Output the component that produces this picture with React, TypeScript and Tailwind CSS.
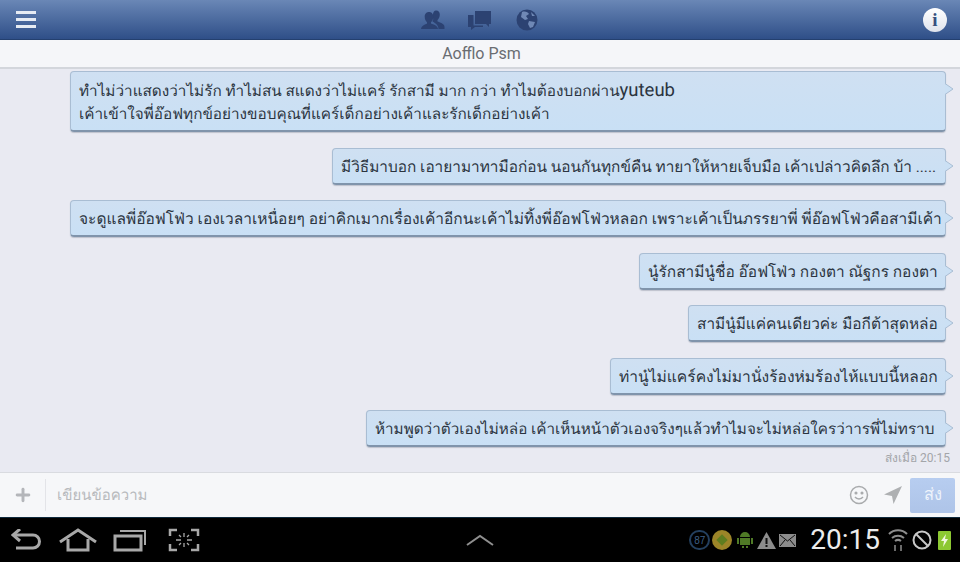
import type { ReactNode } from "react";
import { Plus } from "lucide-react";

const thai = "font-['Roboto','Noto_Sans','Liberation_Sans','DejaVu_Sans',sans-serif]";

function Bubble({ width, mt, size, children }: { width: string; mt: string; size: string; children: ReactNode }) {
  return (
    <div className={`relative ${width} ${mt} ${size} self-end whitespace-nowrap rounded-[4px] border border-[#a9bdd3] border-b-2 border-b-[#8094ab] bg-gradient-to-b from-[#cfe0f2] to-[#c9e0f5] pb-[4px] pl-[8px] pr-[9px] pt-[7px] leading-[23px] text-[#2b3440] shadow-[0_1px_1px_rgba(90,100,120,0.3)] [text-rendering:geometricPrecision]`}>
      {children}
      <svg className="absolute right-[-9px] top-[11px]" width="9" height="12" viewBox="0 0 9 12" fill="#cbe0f4" stroke="#a9bdd3">
        <path d="M0 0.500 8 6 0 11.500" />
      </svg>
    </div>
  );
}

function Friends() {
  return (
    <svg width="24" height="20" viewBox="0 0 24 20" fill="#2c4272">
      <path d="M15 0.500c2.700 0 3.800 2 3.800 4.200 0 2-1 4.300-2.300 5.300v1.500c2 .8 7 2 7 5.500V19h-6c0-4-3.500-6-6-7.500 0-1 .3-1.500.8-2.300C11.600 6 11.500 0.500 15 .5z" />
      <path d="M8 2c3 0 4.300 2.300 4.300 4.800 0 2.200-1 4.400-2.300 5.400v1.300c2.500 1 6.500 2 7 5.500H0c.5-3.500 4.500-4.500 6-5.500v-1.300c-1.300-1-2.300-3.200-2.300-5.400C3.700 4.300 5 2 8 2z" />
    </svg>
  );
}

function Chat() {
  return (
    <svg width="23" height="20" viewBox="0 0 23 20" fill="#2c4272">
      <path d="M7 1h16v13h-2v3l-3-3H7z" />
      <path d="M0 5h5.500v10.500H15V17H7l-4 3v-3H0z" />
    </svg>
  );
}

function Globe() {
  return (
    <svg width="22" height="22" viewBox="0 0 22 22">
      <circle cx="11" cy="11" r="10.500" fill="#2c4272" />
      <path d="M6 3c3-1 6 0 7 2l-3 2 2 3-3 1-4-3zM13 12l6 1-2 5-3 1-2-4zM15 3l4 4-3 0z" fill="#6f88b5" />
    </svg>
  );
}

function Smiley() {
  return (
    <svg width="20" height="20" viewBox="0 0 20 20" fill="none" stroke="#a9abad" strokeWidth="1.500">
      <circle cx="10" cy="10" r="8.500" />
      <circle cx="7" cy="8" r="0.800" fill="#a9abad" />
      <circle cx="13" cy="8" r="0.800" fill="#a9abad" />
      <path d="M6 12c2 2.500 6 2.500 8 0" />
    </svg>
  );
}

function Locate() {
  return (
    <svg width="18" height="18" viewBox="0 0 18 18" fill="#aeb0b2">
      <path d="M18 0 0 8.500l8 1.500 1.500 8z" />
    </svg>
  );
}

function NavIcons() {
  return (
    <div className="flex flex-1 basis-0 items-center">
      <svg className="ml-[2px]" width="31" height="22" viewBox="0 0 31 22" fill="none" stroke="#a8a8a8" strokeWidth="3">
        <path d="M3 6h19a6.500 6.500 0 0 1 0 13H5" />
        <path d="M9 0 2 6l7 6" />
      </svg>
      <svg className="ml-[17px]" width="38" height="24" viewBox="0 0 38 24" fill="none" stroke="#a8a8a8" strokeWidth="3">
        <path d="M1 14 19 2l18 12" />
        <path d="M9 11v11h20V11" />
      </svg>
      <svg className="ml-[16px]" width="34" height="24" viewBox="0 0 34 24" fill="none" stroke="#a8a8a8" strokeWidth="3">
        <rect x="2" y="8" width="26" height="14" />
        <path d="M7 3h25v14" strokeWidth="2" />
      </svg>
      <svg className="ml-[21px]" width="32" height="24" viewBox="0 0 32 24" fill="none" stroke="#a8a8a8">
        <path d="M2 8V2h7M2 16v6h7M30 8V2h-7M30 16v6h-7" strokeWidth="2.500" />
        <path d="M16 5v4M16 15v4M8 12h5M19 12h5M11 7l2 2M21 7l-2 2M11 17l2-2M21 17l-2-2" strokeWidth="1.300" />
      </svg>
    </div>
  );
}

function StatusIcons() {
  return (
    <div className="flex items-center">
      <span className="flex h-[20px] w-[21px] items-center justify-center rounded-full border-2 border-[#24405f] font-['Liberation_Sans',sans-serif] text-[10px] text-[#3d5f85]">87</span>
      <span className="ml-[2px] flex h-[20px] w-[20px] items-center justify-center rounded-full bg-[#9c8528]">
        <span className="h-[8px] w-[8px] rotate-45 bg-[#5f7d1f]" />
      </span>
      <svg className="ml-[4px]" width="18" height="16" viewBox="0 0 18 16" fill="#4f7a26">
        <path d="M4 5a5 5 0 0 1 10 0zM4 6h10v7H4zM1 6h2v6H1zM15 6h2v6h-2zM6 14h2v2H6zM10 14h2v2h-2z" />
      </svg>
      <svg className="ml-[3px]" width="19" height="17" viewBox="0 0 19 17">
        <path d="M9.500 0 19 17H0z" fill="#8c8c8c" />
        <path d="M8.500 6h2v6h-2zM8.500 13h2v2h-2z" fill="#111" />
      </svg>
      <svg className="ml-[3px]" width="17" height="13" viewBox="0 0 17 13" fill="#8c8c8c">
        <path d="M0 0h17v13H0z" />
        <path d="M1 1l7.500 6L16 1M1 12l5-6M16 12l-5-6" fill="none" stroke="#111" />
      </svg>
    </div>
  );
}

export default function App() {
  return (
    <div className={`flex h-[562px] w-[960px] flex-col overflow-hidden bg-black ${thai}`}>
      {/* top bar */}
      <div className="flex h-[40px] shrink-0 items-center justify-between border-b border-[#24406f] bg-gradient-to-b from-[#6a87b6] to-[#2f4f88] pl-[16px] pr-[13px]">
        <div className="flex w-[20px] flex-col gap-[4px]">
          <span className="h-[3px] bg-[#e6ebf3]" />
          <span className="h-[3px] bg-[#e6ebf3]" />
          <span className="h-[3px] bg-[#e6ebf3]" />
        </div>
        <div className="flex items-center">
          <Friends />
          <span className="ml-[23px]"><Chat /></span>
          <span className="ml-[25px]"><Globe /></span>
        </div>
        <div className="flex h-[24px] w-[24px] items-center justify-center rounded-full bg-gradient-to-b from-white to-[#dfe3ec] font-['Liberation_Serif',serif] text-[19px] font-bold leading-none text-[#36507f]">
          i
        </div>
      </div>

      {/* name */}
      <div className="flex h-[29px] shrink-0 items-center justify-center border-b-2 border-[#d3d6dc] bg-[#f5f6f9] pl-[3px] font-['Roboto',sans-serif] text-[16px] text-[#6a6d72]">
        Aofflo Psm
      </div>

      {/* messages */}
      <div className="flex min-h-0 flex-1 flex-col bg-[#e9eaf2] pl-[70px] pr-[14px] pt-[2px]">
        <Bubble width="w-[876px]" mt="mt-0" size="text-[15.3px]">
          <div>
            ทำไม่ว่าแสดงว่าไม่รัก ทำไม่สน สแดงว่าไม่แคร์ รักสามี มาก กว่า ทำไมต้องบอกผ่าน<span className="text-[18.5px]">yuteub</span>
          </div>
          <div>เค้าเข้าใจพี่อ๊อฟทุกข์อย่างขอบคุณที่แคร์เด็กอย่างเค้าและรักเด็กอย่างเค้า</div>
        </Bubble>
        <Bubble width="w-[614px]" mt="mt-[16px]" size="text-[15.4px]">
          มีวิธีมาบอก เอายามาทามือก่อน นอนกันทุกข์คืน ทายาให้หายเจ็บมือ เค้าเปล่าวคิดลึก บ้า .....
        </Bubble>
        <Bubble width="w-[876px]" mt="mt-[15px]" size="text-[15.5px]">
          จะดูแลพี่อ๊อฟโฟ่ว เองเวลาเหนื่อยๆ อย่าคิกเมากเรื่องเค้าอีกนะเค้าไม่ทิ้งพี่อ๊อฟโฟ่วหลอก เพราะเค้าเป็นภรรยาพี่ พี่อ๊อฟโฟ่วคือสามีเค้า
        </Bubble>
        <Bubble width="w-[307px]" mt="mt-[16px]" size="text-[15.45px]">
          นู๋รักสามีนู๋ชื่อ อ๊อฟโฟ่ว กองตา ณัฐกร กองตา
        </Bubble>
        <Bubble width="w-[258px]" mt="mt-[15px]" size="text-[15.4px]">
          สามีนู๋มีแค่คนเดียวค่ะ มือกีต้าสุดหล่อ
        </Bubble>
        <Bubble width="w-[336px]" mt="mt-[16px]" size="text-[15.6px]">
          ท่านู๋ไม่แคร์คงไม่มานั่งร้องห่มร้องไห้แบบนี้หลอก
        </Bubble>
        <Bubble width="w-[580px]" mt="mt-[15px]" size="text-[15.25px]">
          ห้ามพูดว่าตัวเองไม่หล่อ เค้าเห็นหน้าตัวเองจริงๆแล้วทำไมจะไม่หล่อใครว่าารพี่ไม่ทราบ
        </Bubble>
        <div className="mr-[-4px] mt-[4px] text-right text-[12px] leading-[14px] text-[#a3a5a9]">ส่งเมื่อ 20:15</div>
      </div>

      {/* input */}
      <div className="flex h-[45px] shrink-0 items-center border-t border-[#d9dbe0] bg-[#f6f7f9] pr-[5px]">
        <Plus className="ml-[13px] h-[20px] w-[20px] text-[#b4b6ba]" strokeWidth={3.500} />
        <div className="ml-[12px] h-[32px] w-px bg-[#e3e4e8]" />
        <span className="ml-[11px] flex-1 text-[15px] text-[#b8babd] [text-rendering:geometricPrecision]">เขียนข้อความ</span>
        <span className="mr-[1px]"><Smiley /></span>
        <span className="ml-[14px]"><Locate /></span>
        <button className="ml-[8px] flex h-[35px] w-[45px] items-center justify-center rounded-[2px] bg-gradient-to-b from-[#b7cdf0] to-[#aec4e8] text-[16.5px] text-[#eef3fb]">ส่ง</button>
      </div>

      {/* android nav bar */}
      <div className="flex h-[45px] shrink-0 items-center border-t border-[#0f2a3d] bg-black pl-[9px] pr-[9px]">
        <NavIcons />
        <svg width="30" height="14" viewBox="0 0 30 14" fill="none" stroke="#8f8f8f" strokeWidth="2">
          <path d="M2 12 15 3l13 9" />
        </svg>
        <div className="flex flex-1 basis-0 items-center justify-end">
          <StatusIcons />
          <span className="ml-[14px] font-['Roboto',sans-serif] text-[28px] leading-none text-[#ececec]">20:15</span>
          <svg className="ml-[8px]" width="20" height="24" viewBox="0 0 20 24" fill="none" stroke="#8d8d8d" strokeWidth="2">
            <path d="M1 6c5-5 13-5 18 0M4 10c3.500-3 8.500-3 12 0M7 13c2-1.500 4-1.500 6 0" />
            <path d="M7 17v6M13 17v6" strokeWidth="1.500" />
          </svg>
          <svg className="ml-[4px]" width="20" height="20" viewBox="0 0 20 20" fill="none" stroke="#c8c8c8" strokeWidth="2">
            <circle cx="10" cy="10" r="8.500" />
            <path d="m4 4 12 12" />
          </svg>
          <span className="relative ml-[6px] h-[19px] w-[13px] rounded-[1px] bg-[#8cc832]">
            <svg className="absolute left-[2px] top-[3px]" width="9" height="13" viewBox="0 0 9 13" fill="#f2f7e2">
              <path d="M6 0 1 7h3l-1 6 5-8H5z" />
            </svg>
          </span>
        </div>
      </div>
    </div>
  );
}
